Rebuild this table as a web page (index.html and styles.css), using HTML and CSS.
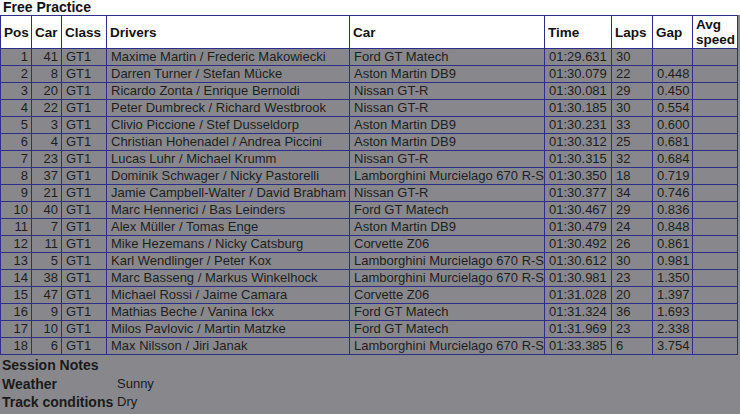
FILE: index.html
```html
<!DOCTYPE html>
<html>
<head>
<meta charset="utf-8">
<link rel="stylesheet" href="styles.css">
</head>
<body>
<div class="title">Free Practice</div>
<table class="results">
<colgroup>
<col class="c-pos"><col class="c-car"><col class="c-class"><col class="c-drivers"><col class="c-model"><col class="c-time"><col class="c-laps"><col class="c-gap"><col class="c-speed">
</colgroup>
<thead>
<tr><th>Pos</th><th>Car</th><th>Class</th><th>Drivers</th><th>Car</th><th>Time</th><th>Laps</th><th>Gap</th><th>Avg speed</th></tr>
</thead>
<tbody>
<tr><td class="num">1</td><td class="num">41</td><td>GT1</td><td>Maxime Martin / Frederic Makowiecki</td><td>Ford GT Matech</td><td>01:29.631</td><td>30</td><td></td><td></td></tr>
<tr><td class="num">2</td><td class="num">8</td><td>GT1</td><td>Darren Turner / Stefan Mücke</td><td>Aston Martin DB9</td><td>01:30.079</td><td>22</td><td>0.448</td><td></td></tr>
<tr><td class="num">3</td><td class="num">20</td><td>GT1</td><td>Ricardo Zonta / Enrique Bernoldi</td><td>Nissan GT-R</td><td>01:30.081</td><td>29</td><td>0.450</td><td></td></tr>
<tr><td class="num">4</td><td class="num">22</td><td>GT1</td><td>Peter Dumbreck / Richard Westbrook</td><td>Nissan GT-R</td><td>01:30.185</td><td>30</td><td>0.554</td><td></td></tr>
<tr><td class="num">5</td><td class="num">3</td><td>GT1</td><td>Clivio Piccione / Stef Dusseldorp</td><td>Aston Martin DB9</td><td>01:30.231</td><td>33</td><td>0.600</td><td></td></tr>
<tr><td class="num">6</td><td class="num">4</td><td>GT1</td><td>Christian Hohenadel / Andrea Piccini</td><td>Aston Martin DB9</td><td>01:30.312</td><td>25</td><td>0.681</td><td></td></tr>
<tr><td class="num">7</td><td class="num">23</td><td>GT1</td><td>Lucas Luhr / Michael Krumm</td><td>Nissan GT-R</td><td>01:30.315</td><td>32</td><td>0.684</td><td></td></tr>
<tr><td class="num">8</td><td class="num">37</td><td>GT1</td><td>Dominik Schwager / Nicky Pastorelli</td><td>Lamborghini Murcielago 670 R-S</td><td>01:30.350</td><td>18</td><td>0.719</td><td></td></tr>
<tr><td class="num">9</td><td class="num">21</td><td>GT1</td><td>Jamie Campbell-Walter / David Brabham</td><td>Nissan GT-R</td><td>01:30.377</td><td>34</td><td>0.746</td><td></td></tr>
<tr><td class="num">10</td><td class="num">40</td><td>GT1</td><td>Marc Hennerici / Bas Leinders</td><td>Ford GT Matech</td><td>01:30.467</td><td>29</td><td>0.836</td><td></td></tr>
<tr><td class="num">11</td><td class="num">7</td><td>GT1</td><td>Alex Müller / Tomas Enge</td><td>Aston Martin DB9</td><td>01:30.479</td><td>24</td><td>0.848</td><td></td></tr>
<tr><td class="num">12</td><td class="num">11</td><td>GT1</td><td>Mike Hezemans / Nicky Catsburg</td><td>Corvette Z06</td><td>01:30.492</td><td>26</td><td>0.861</td><td></td></tr>
<tr><td class="num">13</td><td class="num">5</td><td>GT1</td><td>Karl Wendlinger / Peter Kox</td><td>Lamborghini Murcielago 670 R-S</td><td>01:30.612</td><td>30</td><td>0.981</td><td></td></tr>
<tr><td class="num">14</td><td class="num">38</td><td>GT1</td><td>Marc Basseng / Markus Winkelhock</td><td>Lamborghini Murcielago 670 R-S</td><td>01:30.981</td><td>23</td><td>1.350</td><td></td></tr>
<tr><td class="num">15</td><td class="num">47</td><td>GT1</td><td>Michael Rossi / Jaime Camara</td><td>Corvette Z06</td><td>01:31.028</td><td>20</td><td>1.397</td><td></td></tr>
<tr><td class="num">16</td><td class="num">9</td><td>GT1</td><td>Mathias Beche / Vanina Ickx</td><td>Ford GT Matech</td><td>01:31.324</td><td>36</td><td>1.693</td><td></td></tr>
<tr><td class="num">17</td><td class="num">10</td><td>GT1</td><td>Milos Pavlovic / Martin Matzke</td><td>Ford GT Matech</td><td>01:31.969</td><td>23</td><td>2.338</td><td></td></tr>
<tr><td class="num">18</td><td class="num">6</td><td>GT1</td><td>Max Nilsson / Jiri Janak</td><td>Lamborghini Murcielago 670 R-S</td><td>01:33.385</td><td>6</td><td>3.754</td><td></td></tr>
</tbody>
</table>
<div class="notes">
<div class="notes-title">Session Notes</div>
<div class="note"><span class="label">Weather</span><span class="value">Sunny</span></div>
<div class="note"><span class="label">Track conditions</span><span class="value">Dry</span></div>
</div>
</body>
</html>
```
FILE: styles.css
```css
html, body {
  margin: 0;
  padding: 0;
}
body {
  background: #88888c;
  font-family: "Liberation Sans", Arial, sans-serif;
  font-size: 13px;
  color: #1e1e1e;
  width: 740px;
  height: 414px;
  overflow: hidden;
}
.title {
  background: #fff;
  font-weight: bold;
  font-size: 14px;
  color: #111;
  height: 15px;
  line-height: 15px;
  padding-left: 3px;
}
.results {
  border-collapse: collapse;
  table-layout: fixed;
  width: 737px;
  background: #fff;
}
.c-pos { width: 31px; }
.c-car { width: 30px; }
.c-class { width: 45px; }
.c-drivers { width: 243px; }
.c-model { width: 195px; }
.c-time { width: 67px; }
.c-laps { width: 41px; }
.c-gap { width: 40px; }
.c-speed { width: 45px; }
.results th, .results td {
  border: 1px solid #2e2e88;
  padding: 0 3px 0 4px;
  white-space: nowrap;
  overflow: hidden;
  text-align: left;
}
.results th {
  height: 32px;
  font-weight: bold;
  font-size: 13.5px;
  line-height: 15px;
  white-space: normal;
  color: #111;
  padding-left: 3px;
  padding-right: 2px;
}
.results tbody tr {
  background: #88888c;
}
.results td {
  height: 16px;
  line-height: 16px;
}
.results td.num {
  text-align: right;
}
.notes {
  padding: 1px 0 0 2px;
  color: #1a1a1a;
}
.notes-title {
  font-weight: bold;
  font-size: 14px;
  height: 19px;
  line-height: 19px;
}
.note {
  display: flex;
  height: 18px;
  line-height: 18px;
}
.label {
  font-weight: bold;
  font-size: 14px;
  width: 115px;
}
```
